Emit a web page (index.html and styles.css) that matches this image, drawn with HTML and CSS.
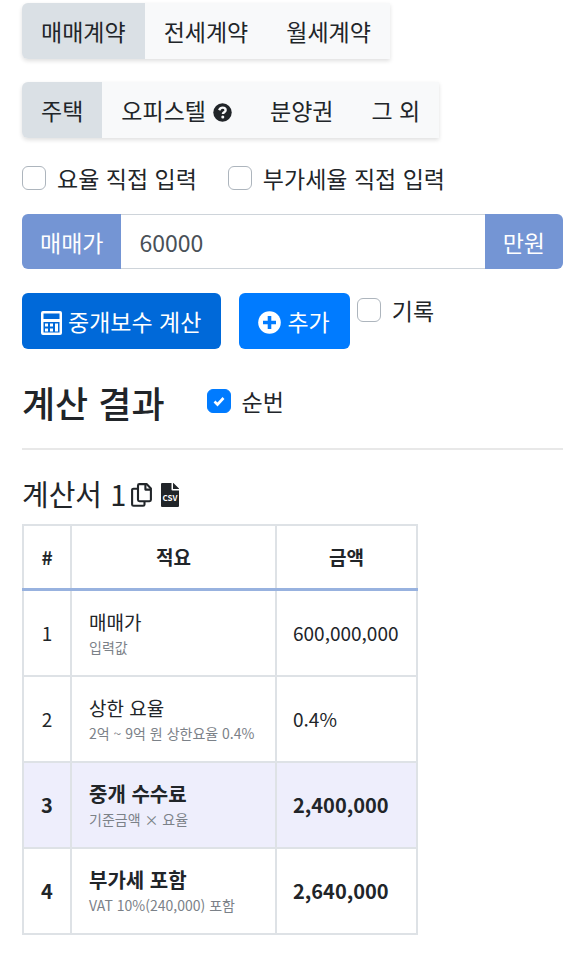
FILE: index.html
```html
<!DOCTYPE html>
<html lang="ko">
<head>
<meta charset="utf-8">
<meta name="viewport" content="width=device-width, initial-scale=1">
<title>중개보수 계산</title>
<link rel="stylesheet" href="styles.css">
</head>
<body>
<main class="page">
  <form class="form">
    <div class="btn-group">
      <button type="button" class="tab tab-active">매매계약</button>
      <button type="button" class="tab">전세계약</button>
      <button type="button" class="tab">월세계약</button>
    </div>
    <div class="btn-group">
      <button type="button" class="tab tab-active">주택</button>
      <button type="button" class="tab">오피스텔
        <svg class="icon-help" viewBox="0 0 20 20" aria-hidden="true"><circle cx="10" cy="10" r="9.7" fill="currentColor"/><path d="M6.5 7.6C7.300 5.700 8.500 4.900 10.100 4.900c1.800 0 3.200 1.100 3.200 2.600 0 2.200-2.900 2.200-2.900 4.200" fill="none" stroke="#f8f9fa" stroke-width="2.5"/><circle cx="10.300" cy="14.700" r="1.6" fill="#f8f9fa"/></svg>
      </button>
      <button type="button" class="tab">분양권</button>
      <button type="button" class="tab">그 외</button>
    </div>
    <div class="checks">
      <label class="check"><input type="checkbox">요율 직접 입력</label>
      <label class="check"><input type="checkbox">부가세율 직접 입력</label>
    </div>
    <div class="input-group">
      <label class="addon addon-start" for="price">매매가</label>
      <input class="price" id="price" type="text" value="60000">
      <span class="addon addon-end">만원</span>
    </div>
    <div class="actions">
      <button type="button" class="btn btn-calc">
        <svg class="icon-calc" viewBox="0 0 21 24" aria-hidden="true"><path fill="currentColor" fill-rule="evenodd" d="M2 0h17a2 2 0 0 1 2 2v20a2 2 0 0 1-2 2H2a2 2 0 0 1-2-2V2a2 2 0 0 1 2-2zM2.500 2.500v5.500h16V2.500zM2.500 11v10.500h16V11z"/><path fill="currentColor" d="M4 12.500h3v3H4zM9 12.500h3v3H9zM14 12.500h3v3h-3zM4 17.500h3v3H4zM9 17.500h3v3H9zM14 14.500h3v6h-3z"/></svg>
        중개보수 계산
      </button>
      <button type="button" class="btn btn-add">
        <svg class="icon-plus" viewBox="0 0 23 23" aria-hidden="true"><circle cx="11.5" cy="11.5" r="11.3" fill="currentColor"/><path d="M11.5 5v13M5 11.5h13" stroke="#007bff" stroke-width="3.6"/></svg>
        추가
      </button>
      <label class="check"><input type="checkbox">기록</label>
    </div>
  </form>

  <header class="result-head">
    <h2>계산 결과</h2>
    <label class="check"><input type="checkbox" checked>순번</label>
  </header>

  <section>
    <div class="sheet-head">
      <h5>계산서 1</h5>
      <button type="button" class="icon-button" aria-label="복사">
        <svg class="icon-copy" viewBox="0 0 21 24" aria-hidden="true"><g fill="none" stroke="currentColor" stroke-width="2.1" stroke-linejoin="round"><path d="M7 5.7H2.5a1.4 1.4 0 0 0-1.4 1.4v14.3a1.4 1.4 0 0 0 1.4 1.4h9.6a1.4 1.4 0 0 0 1.4-1.4V18.6"/><path d="M8.4 1.1h7.2l4.3 4.3v11.4a1.4 1.4 0 0 1-1.4 1.4H8.4A1.4 1.4 0 0 1 7 16.8V2.5a1.4 1.4 0 0 1 1.4-1.4z"/><path d="M14.4 1.3v5.3h5.3"/></g></svg>
      </button>
      <button type="button" class="icon-button" aria-label="CSV 저장">
        <svg class="icon-csv" viewBox="0 0 18 24" aria-hidden="true"><path fill="currentColor" d="M1.1 0H10.500v6.400a1.100 1.100 0 0 0 1.100 1.100H18V22.900A1.100 1.100 0 0 1 16.900 24H1.100A1.100 1.100 0 0 1 0 22.900V1.100A1.100 1.100 0 0 1 1.100 0zM12 0h.4L18 5.600V6H12z"/><text class="csv-text" x="9" y="18" text-anchor="middle">CSV</text></svg>
      </button>
    </div>
    <table class="sheet">
      <thead>
        <tr><th class="num">#</th><th class="desc">적요</th><th class="amount">금액</th></tr>
      </thead>
      <tbody>
        <tr><td class="num">1</td><td>매매가<small>입력값</small></td><td class="amount">600,000,000</td></tr>
        <tr><td class="num">2</td><td>상한 요율<small>2억 ~ 9억 원 상한요율 0.4%</small></td><td class="amount">0.4%</td></tr>
        <tr class="strong highlight"><td class="num">3</td><td>중개 수수료<small>기준금액 × 요율</small></td><td class="amount">2,400,000</td></tr>
        <tr class="strong"><td class="num">4</td><td>부가세 포함<small>VAT 10%(240,000) 포함</small></td><td class="amount">2,640,000</td></tr>
      </tbody>
    </table>
  </section>
</main>
</body>
</html>
```
FILE: styles.css
```css
* {
  box-sizing: border-box;
}

body {
  margin: 0;
  background: #fff;
  color: #212529;
  font-family: "Noto Sans CJK KR", sans-serif;
  font-size: 23px;
  line-height: 34px;
}

button,
input {
  margin: 0;
  font: inherit;
  color: inherit;
}

.page {
  padding: 3px 22px 24px;
}

.form {
  display: flex;
  flex-direction: column;
  align-items: flex-start;
}

.btn-group {
  display: flex;
  margin-bottom: 23px;
  border-radius: 6px 0 0 6px;
  background: #f8f9fa;
  box-shadow: 0 2px 4px rgba(0, 0, 0, 0.13);
}

.tab {
  display: flex;
  align-items: center;
  gap: 7px;
  padding: 11px 19px;
  border: 0;
  background: transparent;
}

.tab-active {
  border-radius: 6px 0 0 6px;
  background: #dae0e5;
}

.icon-help {
  width: 19px;
  height: 19px;
  margin-top: 4px;
}

.checks {
  display: flex;
  gap: 31px;
  margin-bottom: 19px;
}

.check {
  display: flex;
  align-items: center;
  gap: 11px;
}

.check input {
  appearance: none;
  width: 24px;
  height: 24px;
  border: 1px solid #adb5bd;
  border-radius: 6px;
  background: #fff;
}

.check input:checked {
  border-color: #007bff;
  background: #007bff url("data:image/svg+xml,%3Csvg xmlns='http://www.w3.org/2000/svg' viewBox='0 0 12 12'%3E%3Cpath d='M1.500 6.500l3 3 6-6.500' fill='none' stroke='white' stroke-width='2.600'/%3E%3C/svg%3E") center / 12px no-repeat;
}

.input-group {
  display: flex;
  align-self: stretch;
  height: 55px;
  margin-bottom: 24px;
}

.addon {
  display: flex;
  align-items: center;
  padding: 1px 18px 0;
  background: #7495d4;
  color: #fff;
}

.addon-start {
  border-radius: 6px 0 0 6px;
}

.addon-end {
  border-radius: 0 6px 6px 0;
}

.price {
  flex: 1;
  min-width: 0;
  padding: 1px 18px 0;
  border: solid #ced4da;
  border-width: 1px 0;
  border-radius: 0;
  background: #fff;
  color: #495057;
}

.actions {
  display: flex;
  align-items: flex-start;
}

.actions .check {
  margin-left: 7px;
}

.btn {
  display: flex;
  align-items: center;
  gap: 6px;
  padding: 11px 20px 11px 19px;
  border: 0;
  border-radius: 6px;
  background: #007bff;
  color: #fff;
}

.btn-calc {
  margin-right: 18px;
  background: #0069d9;
}

.icon-calc {
  width: 21px;
  height: 24px;
  margin-top: 3px;
}

.icon-plus {
  width: 23px;
  height: 23px;
  margin-top: 3px;
}

.result-head {
  display: flex;
  align-items: center;
  gap: 42px;
  padding: 27px 0 19px;
  border-bottom: 2px solid #e8e8e8;
}

.result-head h2 {
  margin: 0;
  font-size: 36px;
  font-weight: 500;
  line-height: 53px;
}

.result-head .check {
  margin-bottom: 4px;
}

.sheet-head {
  display: flex;
  align-items: center;
  gap: 5px;
  padding: 22px 0 10px;
}

.sheet-head h5 {
  margin: 0;
  font-size: 29px;
  font-weight: 400;
  line-height: 42px;
}

.icon-button {
  display: flex;
  margin: 4px 4px 0 0;
  padding: 0;
  border: 0;
  background: transparent;
}

.icon-copy {
  width: 21px;
  height: 24px;
}

.icon-csv {
  width: 18px;
  height: 24px;
}

.csv-text {
  fill: #fff;
  font-size: 8px;
  font-weight: 700;
}

.sheet {
  border-collapse: collapse;
  font-size: 19px;
  line-height: 28px;
}

.sheet th,
.sheet td {
  padding: 17px;
  border: 2px solid #dee2e6;
  text-align: left;
}

.sheet th {
  height: 64px;
  border-bottom: 3px solid #98b2df;
  text-align: center;
}

.sheet td {
  height: 86px;
}

.sheet .num {
  padding: 17px 16px;
  width: 48px;
  text-align: center;
}

.sheet .desc {
  width: 205px;
}

.sheet .amount {
  padding: 17px 16px;
  width: 141px;
}

.sheet small {
  display: block;
  color: #7b8188;
  font-size: 14px;
  font-weight: 400;
  line-height: 22px;
}

.strong {
  font-size: 20px;
  font-weight: 700;
}

.highlight {
  background: #eeeefc;
}
```
